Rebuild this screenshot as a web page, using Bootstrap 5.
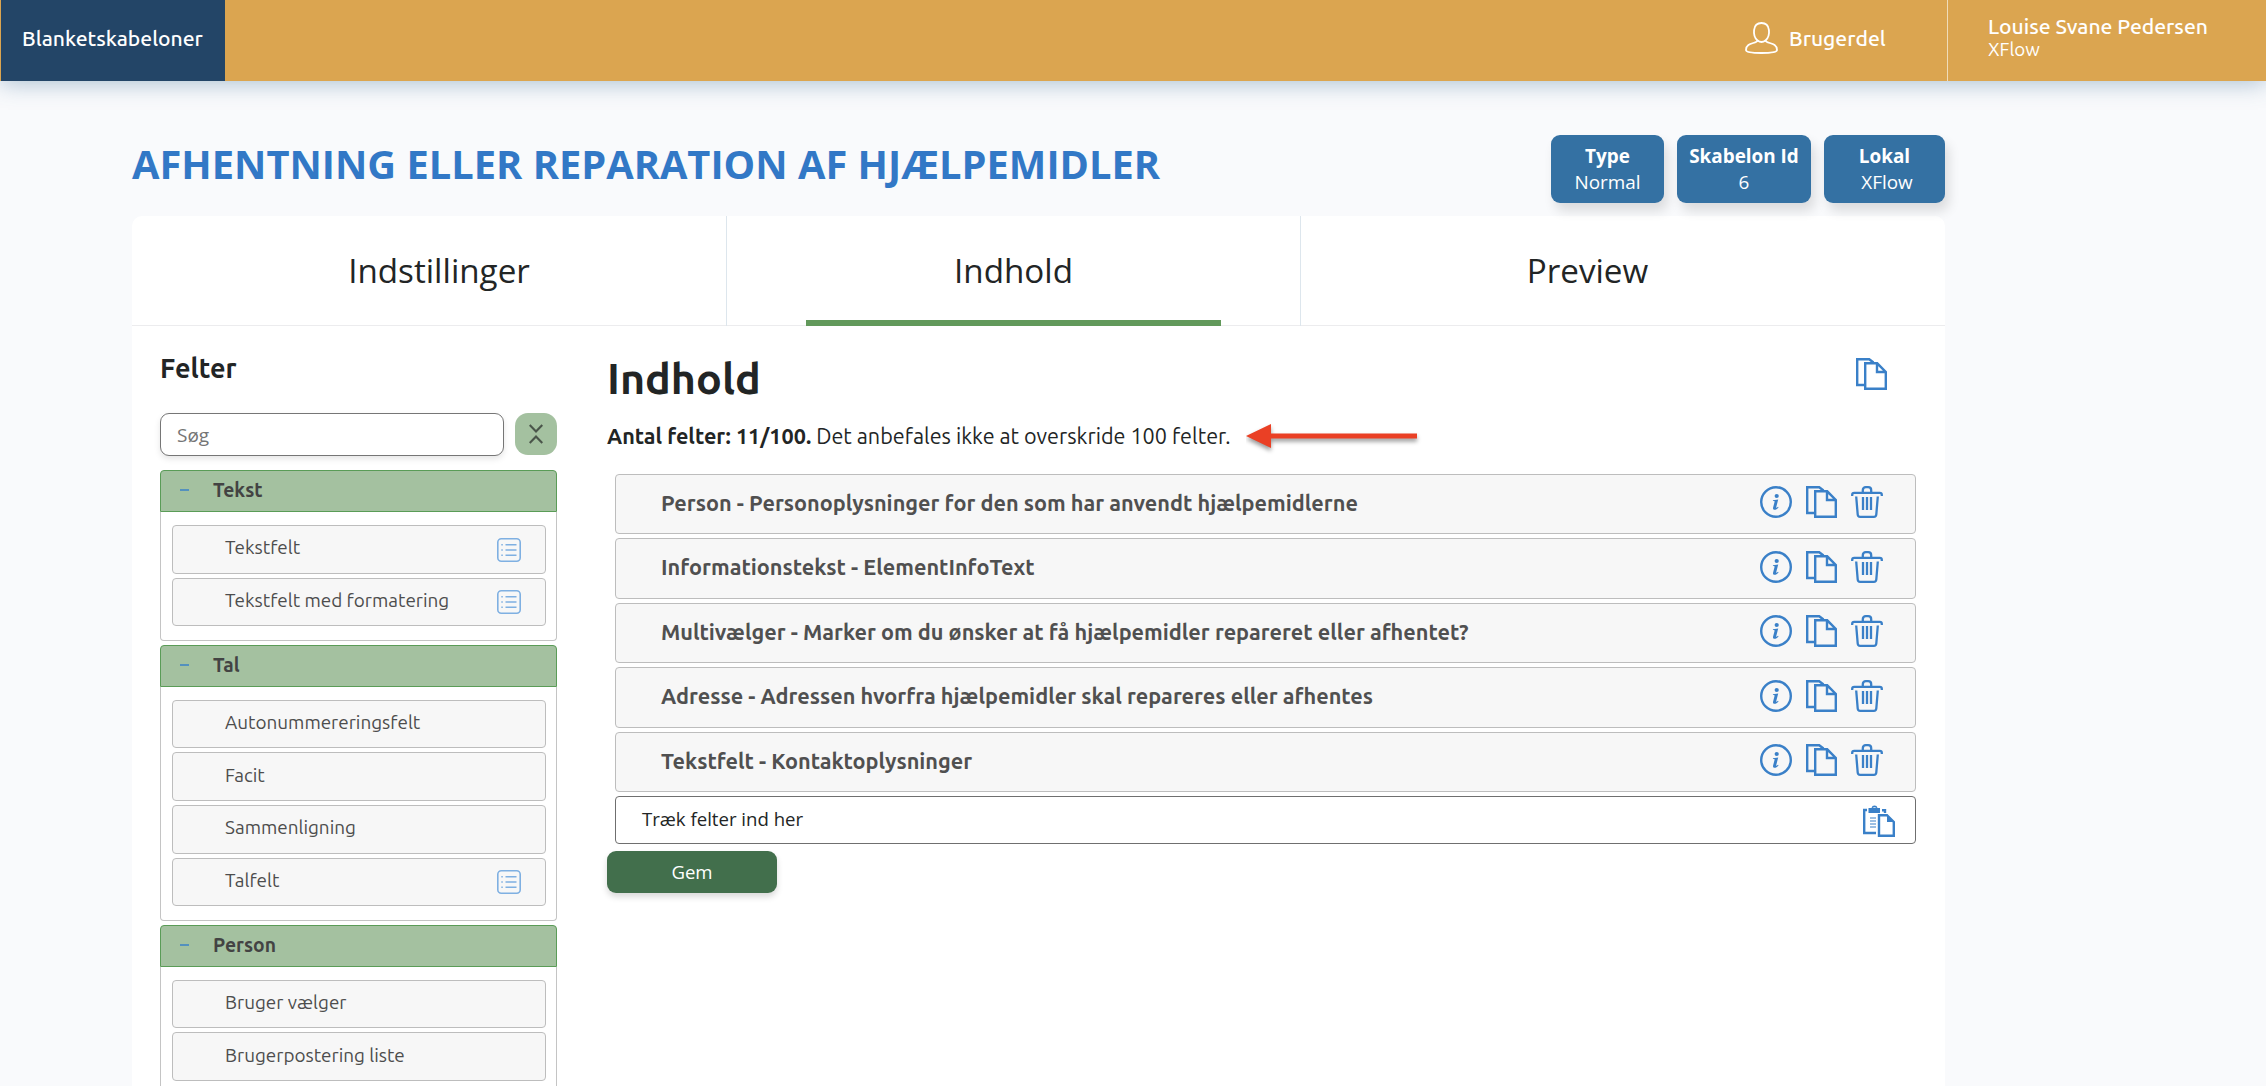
<!DOCTYPE html>
<html lang="da">
<head>
  <meta charset="UTF-8">
  <title>Blanketskabeloner</title>
  <link href="https://cdn.jsdelivr.net/npm/bootstrap@5.3.0/dist/css/bootstrap.min.css" rel="stylesheet">
  <style>
    body { font-family: "Open Sans", "Noto Sans", sans-serif; font-size: 19.3px; line-height: 26px; color: #222525; background: #f9fafc; height: 1086px; overflow: hidden; }
    svg { display: block; flex: none; }
    .ubu { font-family: "Ubuntu", "Open Sans", sans-serif; }

    .topbar { height: 81px; background: #dba550; color: #fff; font-size: 21.1px; font-weight: 500; padding-left: 1px; box-shadow: 0 2px 22px rgba(60, 110, 150, .42); }
    .topbar-tab { width: 224px; background: #234567; padding: 0 0 6px 21px; }
    .topbar-part { width: 202px; padding-bottom: 5px; gap: 11px; }
    .topbar-user { width: 319px; border-left: 1px solid #f0dcb9; padding: 13px 0 0 40px; }
    .user-org { font-size: 18.8px; line-height: 20px; font-weight: 400; }

    .page-wrap { width: 1813px; margin-left: 132px; }
    .page-title { font-size: 39.8px; line-height: 54px; font-weight: 700; color: #3278c6; padding-top: 56px; }
    .info-boxes { gap: 13px; padding-top: 54px; }
    .info-box { height: 68px; border-radius: 9px; background: #3471a3; color: #fff; padding-top: 8px; box-shadow: 4px 8px 12px rgba(0, 0, 0, .12); font-size: 18.9px; }
    .box-a { width: 113px; }
    .box-b { width: 134px; }
    .box-c { width: 121px; }

    .main-panel { margin-top: 13px; background: #fff; border-radius: 10px 10px 0 0; height: 870px; overflow: hidden; }
    .tab-strip { height: 110px; border-bottom: 1px solid #ececee; font-size: 33.2px; }
    .tab-cell { width: 574px; border-left: 1px solid #dde6ed; height: 110px; }
    .tab-cell.tab-first { width: 594px; border-left: 0; padding-left: 20px; }
    .tab-text { padding-top: 30px; line-height: 50px; }
    .tab-line { height: 6px; width: 415px; background: #62995b; }

    .side { width: 397px; margin-left: 28px; }
    .side-title { font-size: 27px; line-height: 36px; font-weight: 700; padding-top: 24px; }
    .search-row { margin-top: 27px; gap: 11px; margin-bottom: 14px; }
    .search-box { width: 344px; height: 43px; border: 1px solid #767676; border-radius: 9px; padding: 0 16px; box-shadow: 0 3px 6px rgba(0, 0, 0, .1); font-size: 19px; font-family: "Open Sans", sans-serif; background: #fff; }
    .search-box::placeholder { color: #757575; }
    .fold-btn { width: 42px; height: 42px; border-radius: 13px; background: #a4c1a0; }
    .group-head { height: 42px; background: #a4c1a0; border: 1px solid #5a9c57; border-radius: 4px 4px 0 0; color: #434343; font-weight: 700; padding: 0 0 2px 19px; gap: 24px; }
    .group-body { border: 1px solid #c4c4c4; border-top: 0; border-radius: 0 0 4px 4px; padding: 13px 10px 10px 11px; margin-bottom: 3.3px; }
    .field-item { height: 48.67px; margin-bottom: 4px; border: 1px solid #bdbdbd; border-radius: 4px; background: #f7f7f7; color: #4d4d4d; font-size: 18.9px; padding: 0 24px 4px 52px; }
    .field-item svg { margin-top: 5px; }

    .content { width: 1309px; margin-left: 50px; }
    .content-title { font-size: 43px; line-height: 56px; font-weight: 700; padding-top: 24px; }
    .copy-all { margin: 32px 29px 0 0; }
    .count-line { font-size: 21.6px; line-height: 28px; margin-top: 16px; }
    .hint-arrow { margin: 0 0 0 15px; }
    .entries { margin: 17.5px 0 0 8px; }
    .entry { height: 60.5px; margin-bottom: 4px; border: 1px solid #bdbdbd; border-radius: 4px; background: #f7f7f7; color: #505050; font-size: 21.68px; font-weight: 700; padding: 0 32px 3px 45px; }
    .entry > span { padding-top: 1px; }
    .entry-icons { gap: 14px; }
    .drop-zone { height: 48px; border: 1px solid #6f6f6f; border-radius: 4px; font-size: 18.6px; padding: 0 20px 3px 26px; }
    .drop-zone, .save-btn { font-family: "Open Sans", sans-serif; }
    .save-btn { width: 170px; height: 42px; margin-top: 7px; border-radius: 9px; background: #426f4c; color: #fff; font-size: 18.6px; box-shadow: 0 4px 6px rgba(0, 0, 0, .15); border: 0; padding: 0 0 1px; }
  </style>
</head>
<body>
  <!-- icon set -->
  <svg class="d-none">
    <symbol id="ic-info" viewBox="0 0 32 32">
      <circle cx="16" cy="16" r="14.8" fill="none" stroke="#3a80c8" stroke-width="2.400"/>
      <circle cx="16.700" cy="10" r="2.100" fill="#3a80c8"/>
      <path d="M13 14.300l5.200-.8-2 7.700c-.2.800.4.900 1.800-.5l.6.500c-1.700 2.300-3.500 2.900-4.600 2.500-.9-.3-1.200-1.200-.9-2.300l1.500-5.600c.1-.5-.3-.6-1.700-.7z" fill="#3a80c8"/>
    </symbol>
    <symbol id="ic-copy" viewBox="0 0 31 32">
      <path d="M9 27H1.200V1.200h12l4.300 3.300" fill="none" stroke="#3a80c8" stroke-width="2.400"/>
      <path d="M9.200 5.300h12L29.800 14v16.800H9.200zM21 5.300V14h8.800" fill="none" stroke="#3a80c8" stroke-width="2.400"/>
    </symbol>
    <symbol id="ic-trash" viewBox="0 0 32 32">
      <path d="M1.200 10V8.800Q1.200 6.800 3.200 6.800h25.600q2 0 2 2V10M11.800 6.500V4.200q0-3 3-3h2.400q3 0 3 3v2.300M5.200 10.500l1.500 18q.2 2.300 2.400 2.300h13.800q2.200 0 2.400-2.300l1.500-18M12 11v13M16 11v13M20 11v13" fill="none" stroke="#3a80c8" stroke-width="2.300"/>
    </symbol>
    <symbol id="ic-list" viewBox="0 0 24 24">
      <rect x=".8" y=".8" width="22.400" height="22.400" rx="3.500" fill="none" stroke="#7fb0e2" stroke-width="1.600"/>
      <path d="M8.500 6.700h11M8.500 12h11M8.500 17.300h11M4.300 6.700h1.500M4.300 12h1.500M4.300 17.300h1.500" stroke="#7fb0e2" stroke-width="1.600"/>
    </symbol>
    <symbol id="ic-minus" viewBox="0 0 9 2">
      <path d="M0 1h9" stroke="#3a80c8" stroke-width="1.500"/>
    </symbol>
  </svg>

  <header class="topbar d-flex position-relative ubu">
    <div class="topbar-tab d-flex align-items-center">Blanketskabeloner</div>
    <div class="topbar-part d-flex align-items-center ms-auto">
      <svg width="33" height="32" viewBox="0 0 33 32" fill="none" stroke="#fff" stroke-width="1.800">
        <path d="M12.500 18.500C7.500 14 7 1 16.500 1S25.500 14 20.500 18.500C21.500 22 32 20 32 28c0 2.500-6 3-15.500 3S1 30.500 1 28c0-8 10.500-6 11.500-9.500z"/>
        <path d="M12.500 18.500q4 3 8 0"/>
      </svg>
      <span>Brugerdel</span>
    </div>
    <div class="topbar-user">
      <div>Louise Svane Pedersen</div>
      <div class="user-org">XFlow</div>
    </div>
  </header>

  <div class="page-wrap">
    <div class="d-flex justify-content-between">
      <h1 class="page-title mb-0">AFHENTNING ELLER REPARATION AF HJÆLPEMIDLER</h1>
      <div class="info-boxes d-flex text-center">
        <div class="info-box box-a"><b>Type</b><br>Normal</div>
        <div class="info-box box-b"><b>Skabelon Id</b><br>6</div>
        <div class="info-box box-c"><b>Lokal</b><br>&nbsp;XFlow</div>
      </div>
    </div>

    <main class="main-panel">
      <div class="tab-strip d-flex text-center">
        <div class="tab-cell tab-first"><div class="tab-text">Indstillinger</div></div>
        <div class="tab-cell d-flex flex-column align-items-center justify-content-between">
          <div class="tab-text">Indhold</div>
          <div class="tab-line"></div>
        </div>
        <div class="tab-cell"><div class="tab-text">Preview</div></div>
      </div>

      <div class="d-flex">
        <aside class="side ubu">
          <h2 class="side-title mb-0">Felter</h2>
          <div class="search-row d-flex">
            <input type="text" class="search-box" placeholder="Søg">
            <button class="fold-btn btn p-0 border-0 d-flex align-items-center justify-content-center">
              <svg width="14" height="20" viewBox="0 0 14 20" fill="none" stroke="#4a554a" stroke-width="2.200"><path d="M.7 1L7 7.500 13.300 1M.7 19L7 12.500l6.300 6.500"/></svg>
            </button>
          </div>

          <div class="group-head d-flex align-items-center"><svg width="9" height="2"><use href="#ic-minus"/></svg><span>Tekst</span></div>
          <div class="group-body">
            <div class="field-item d-flex align-items-center justify-content-between"><span>Tekstfelt</span><svg width="24" height="24"><use href="#ic-list"/></svg></div>
            <div class="field-item d-flex align-items-center justify-content-between"><span>Tekstfelt med formatering</span><svg width="24" height="24"><use href="#ic-list"/></svg></div>
          </div>

          <div class="group-head d-flex align-items-center"><svg width="9" height="2"><use href="#ic-minus"/></svg><span>Tal</span></div>
          <div class="group-body">
            <div class="field-item d-flex align-items-center"><span>Autonummereringsfelt</span></div>
            <div class="field-item d-flex align-items-center"><span>Facit</span></div>
            <div class="field-item d-flex align-items-center"><span>Sammenligning</span></div>
            <div class="field-item d-flex align-items-center justify-content-between"><span>Talfelt</span><svg width="24" height="24"><use href="#ic-list"/></svg></div>
          </div>

          <div class="group-head d-flex align-items-center"><svg width="9" height="2"><use href="#ic-minus"/></svg><span>Person</span></div>
          <div class="group-body">
            <div class="field-item d-flex align-items-center"><span>Bruger vælger</span></div>
            <div class="field-item d-flex align-items-center"><span>Brugerpostering liste</span></div>
          </div>
        </aside>

        <section class="content ubu">
          <div class="d-flex justify-content-between align-items-start">
            <h2 class="content-title mb-0">Indhold</h2>
            <svg class="copy-all" width="31" height="32"><use href="#ic-copy"/></svg>
          </div>
          <div class="count-line d-flex">
            <span><b>Antal felter: 11/100.</b> Det anbefales ikke at overskride 100 felter.</span>
            <svg class="hint-arrow" width="176" height="34" viewBox="0 0 176 34"><path d="M0 14L25 2v9.500h146v5H25V26z" fill="#ea4025" style="filter:drop-shadow(0 3px 2px rgba(0,0,0,.4))"/></svg>
          </div>

          <div class="entries">
            <div class="entry d-flex align-items-center justify-content-between"><span>Person - Personoplysninger for den som har anvendt hjælpemidlerne</span>
              <div class="entry-icons d-flex"><svg width="32" height="32"><use href="#ic-info"/></svg><svg width="31" height="32"><use href="#ic-copy"/></svg><svg width="32" height="32"><use href="#ic-trash"/></svg></div></div>
            <div class="entry d-flex align-items-center justify-content-between"><span>Informationstekst - ElementInfoText</span>
              <div class="entry-icons d-flex"><svg width="32" height="32"><use href="#ic-info"/></svg><svg width="31" height="32"><use href="#ic-copy"/></svg><svg width="32" height="32"><use href="#ic-trash"/></svg></div></div>
            <div class="entry d-flex align-items-center justify-content-between"><span>Multivælger - Marker om du ønsker at få hjælpemidler repareret eller afhentet?</span>
              <div class="entry-icons d-flex"><svg width="32" height="32"><use href="#ic-info"/></svg><svg width="31" height="32"><use href="#ic-copy"/></svg><svg width="32" height="32"><use href="#ic-trash"/></svg></div></div>
            <div class="entry d-flex align-items-center justify-content-between"><span>Adresse - Adressen hvorfra hjælpemidler skal repareres eller afhentes</span>
              <div class="entry-icons d-flex"><svg width="32" height="32"><use href="#ic-info"/></svg><svg width="31" height="32"><use href="#ic-copy"/></svg><svg width="32" height="32"><use href="#ic-trash"/></svg></div></div>
            <div class="entry d-flex align-items-center justify-content-between"><span>Tekstfelt - Kontaktoplysninger</span>
              <div class="entry-icons d-flex"><svg width="32" height="32"><use href="#ic-info"/></svg><svg width="31" height="32"><use href="#ic-copy"/></svg><svg width="32" height="32"><use href="#ic-trash"/></svg></div></div>
            <div class="drop-zone d-flex align-items-center justify-content-between"><span>Træk felter ind her</span>
              <svg class="mt-1" width="32" height="32" viewBox="0 0 32 32">
                <path d="M4 5H1.200v23H13M19 5.300h3V8" fill="none" stroke="#3a80c8" stroke-width="2.400"/>
                <path d="M5.500 3h3q.5-2.400 3-2.400t3 2.400h2.500v5H5.500z" fill="#3a80c8"/>
                <path d="M9.500 2.800q2-1.800 4 0z" fill="#fff"/>
                <path d="M7 13h6M7 16h6M7 19h6M7 22h6" stroke="#3a80c8" stroke-width="1.200"/>
                <path d="M16 10.200h8l6.800 6.800v13.800H16z" fill="#fff" stroke="#3a80c8" stroke-width="2.400"/>
                <path d="M24 10v7h7z" fill="#3a80c8"/>
              </svg></div>
          </div>
          <button class="save-btn btn">Gem</button>
        </section>
      </div>
    </main>
  </div>

  <script src="https://cdn.jsdelivr.net/npm/bootstrap@5.3.0/dist/js/bootstrap.bundle.min.js"></script>
</body>
</html>
